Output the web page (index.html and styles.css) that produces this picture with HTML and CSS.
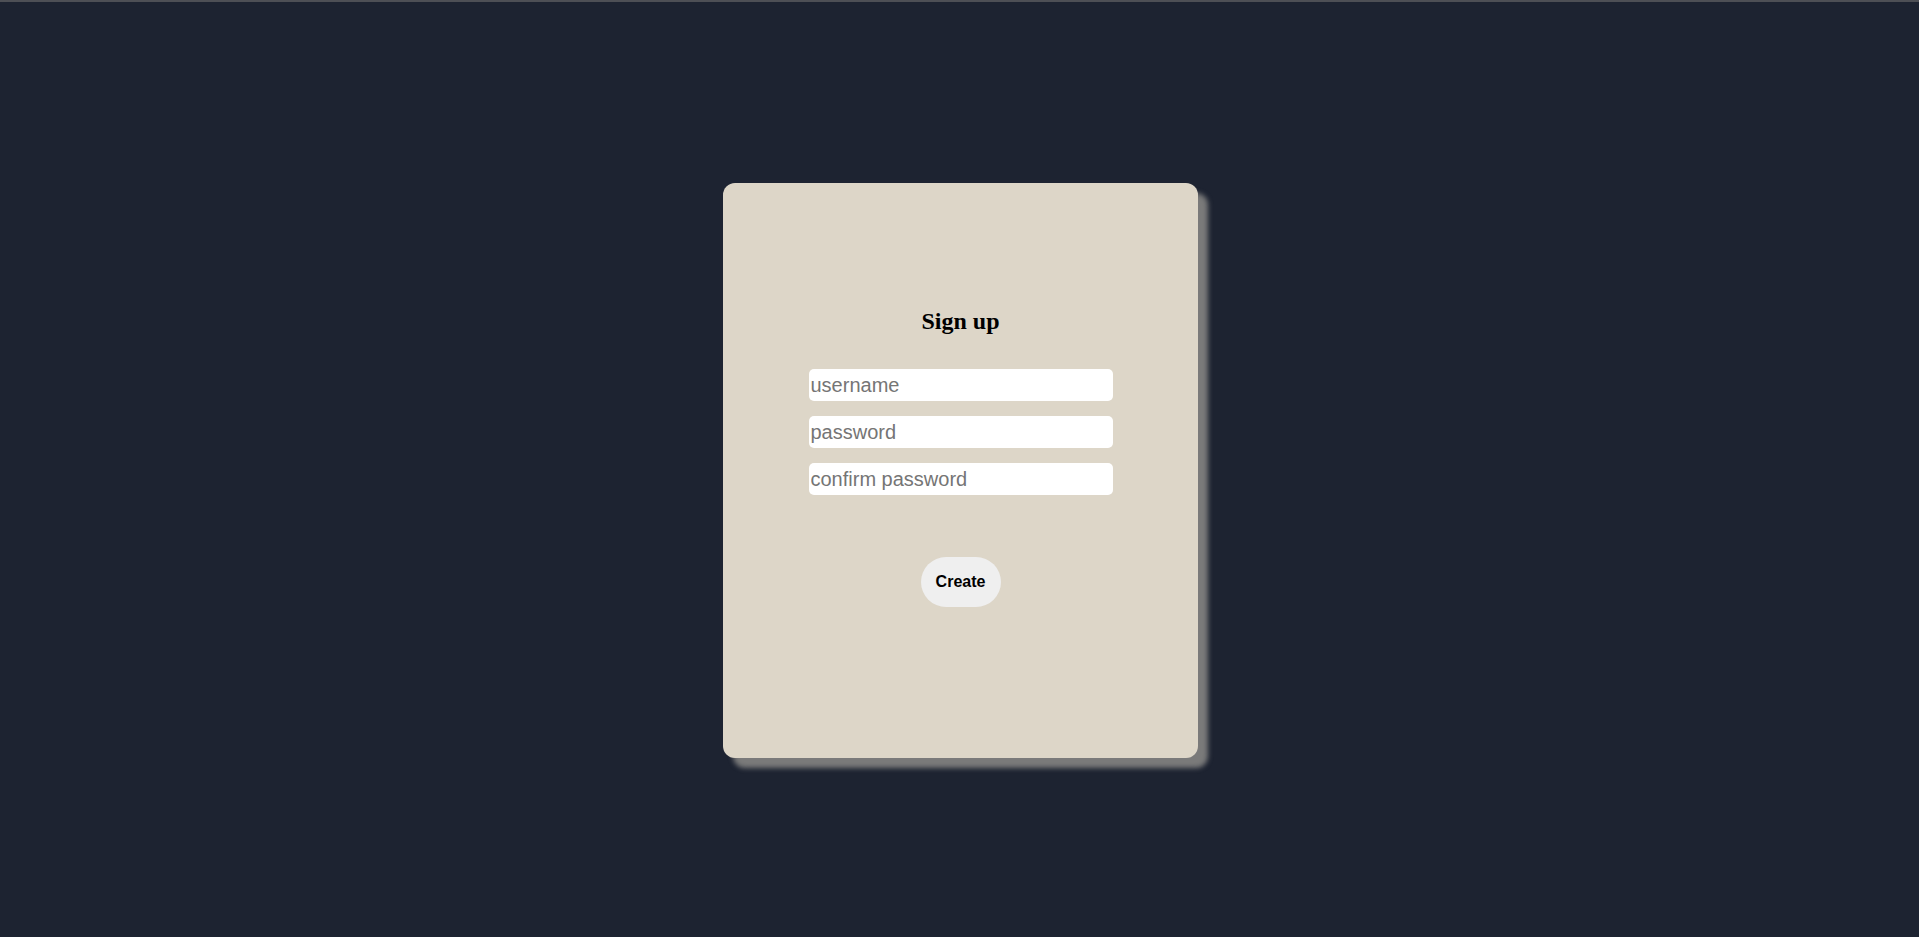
FILE: index.html
```html
<!DOCTYPE html>
<html lang="en">
<head>
<meta charset="utf-8">
<title>Sign up</title>
<link rel="stylesheet" href="styles.css">
</head>
<body>
<div class="topbar"></div>
<main class="stage">
  <form class="card" onsubmit="return false;">
    <h2 class="title">Sign up</h2>
    <div class="fields">
      <input class="field" type="text" placeholder="username">
      <input class="field" type="password" placeholder="password">
      <input class="field" type="password" placeholder="confirm password">
    </div>
    <button class="create" type="submit">Create</button>
  </form>
</main>
</body>
</html>
```
FILE: styles.css
```css
html, body {
  margin: 0;
  padding: 0;
}
body {
  background: #1d2331;
  min-height: 100vh;
  display: flex;
  flex-direction: column;
  font-family: "Liberation Sans", Arial, sans-serif;
}
.topbar {
  height: 2px;
  background: #4d4f55;
}
.stage {
  flex: 1;
  display: flex;
  justify-content: center;
  align-items: flex-start;
  padding-top: 181px;
  padding-left: 2px;
}
.card {
  box-sizing: border-box;
  width: 475px;
  height: 575px;
  background: #ddd6c8;
  border-radius: 12px;
  box-shadow: 10px 10px 5px #7a7a7a;
  display: flex;
  flex-direction: column;
  align-items: center;
  padding-top: 124px;
}
.title {
  margin: 0;
  font-family: "Liberation Serif", "Times New Roman", serif;
  font-size: 24px;
  font-weight: bold;
  line-height: 28px;
  color: #000;
}
.fields {
  margin-top: 34px;
  display: flex;
  flex-direction: column;
  gap: 15px;
}
.field {
  box-sizing: border-box;
  width: 304px;
  height: 32px;
  border: none;
  border-radius: 5px;
  background: #fff;
  padding: 0 2px;
  font-family: "Liberation Sans", Arial, sans-serif;
  font-size: 20px;
  color: #000;
  outline: none;
}
.field::placeholder {
  color: #757575;
}
.create {
  margin-top: 62px;
  width: 80px;
  height: 50px;
  border: none;
  border-radius: 25px;
  background: #efefef;
  font-family: "Liberation Sans", Arial, sans-serif;
  font-size: 16px;
  font-weight: bold;
  color: #000;
  cursor: pointer;
  padding: 0;
}
```
